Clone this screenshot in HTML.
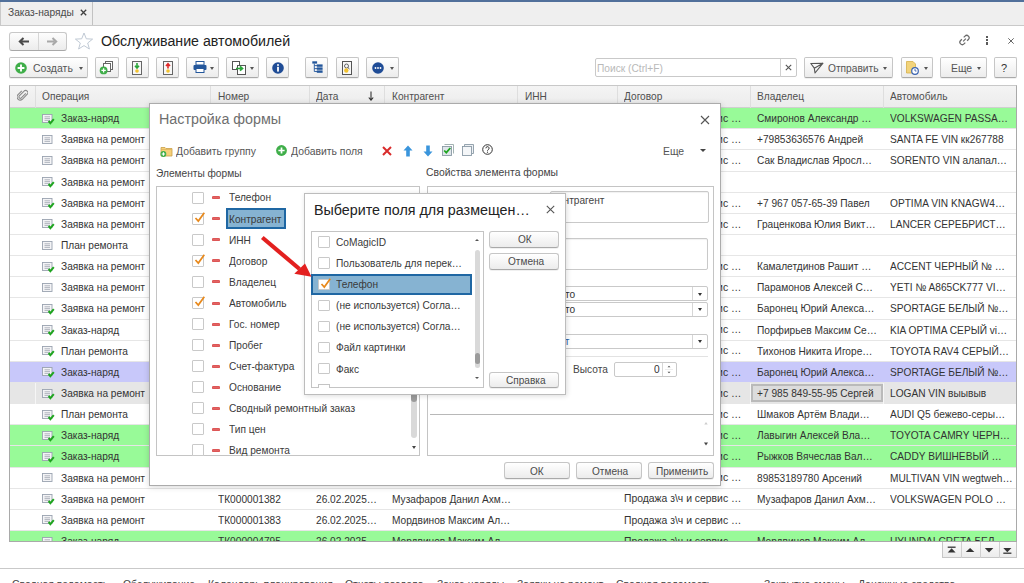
<!DOCTYPE html><html><head><meta charset="utf-8"><style>
*{margin:0;padding:0;box-sizing:border-box}
html,body{width:1024px;height:583px;overflow:hidden;background:#fff;font-family:"Liberation Sans",sans-serif}
div{position:absolute}
.t{white-space:nowrap}
.btn{border:1px solid #c6c6c6;border-bottom-color:#a9a9a9;border-radius:2px;background:linear-gradient(#ffffff,#ececec);box-shadow:0 1px 0 rgba(0,0,0,0.06)}
.dd{width:0;height:0;border-left:2.5px solid transparent;border-right:2.5px solid transparent;border-top:3px solid #555}
.cb{width:11.5px;height:12px;border:1px solid #c9c9c9;border-radius:1px;background:#fff}
.mn{width:8px;height:3px;background:#e26464;border-radius:1.5px;box-shadow:inset 0 0 0 0.6px #d84848}
</style></head><body><div style="left:0px;top:0px;width:1024px;height:26px;background:#efefef;border-bottom:1px solid #c9c9c9"></div><div style="left:0px;top:1px;width:93px;height:24px;background:#efefef;border-right:1px solid #c2c2c2;border-left:1px solid #c9c9c9"></div><div style="left:0px;top:0px;width:1024px;height:1.5px;background:#51709b"></div><div class="t" style="left:8.2px;top:5.717px;font-size:10.914px;line-height:12.551px;color:#4a4a4a;transform:scaleX(0.9346);transform-origin:0 0;">Заказ-наряды</div><svg style="position:absolute;left:80px;top:9px" width="7" height="7" viewBox="0 0 7 7"><path d="M0.8 0.8L6.2 6.2M6.2 0.8L0.8 6.2" stroke="#404040" stroke-width="1.3"/></svg><div style="left:9px;top:31.5px;width:57.5px;height:19px;border:1px solid #c8c8c8;border-bottom-color:#a8a8a8;border-radius:3px;background:linear-gradient(#fdfdfd,#ececec)"></div><div style="left:38.3px;top:32.5px;width:1px;height:17px;background:#d6d6d6"></div><svg style="position:absolute;left:18px;top:37px" width="12" height="9" viewBox="0 0 12 9"><path d="M11 4.5H3.5M5.5 1L1.8 4.5L5.5 8" stroke="#4a4a4a" stroke-width="2" fill="none"/></svg><svg style="position:absolute;left:46px;top:37px" width="12" height="9" viewBox="0 0 12 9"><path d="M1 4.5H8.5M6.5 1L10.2 4.5L6.5 8" stroke="#a8a8a8" stroke-width="2" fill="none"/></svg><svg style="position:absolute;left:74px;top:32px" width="20" height="18" viewBox="0 0 20 18"><path d="M10 1L12.3 6.8L18.6 7.1L13.7 11L15.4 17L10 13.6L4.6 17L6.3 11L1.4 7.1L7.7 6.8Z" stroke="#b9c3cf" stroke-width="0.9" fill="none"/></svg><div class="t" style="left:100.5px;top:32.342px;font-size:15.194px;line-height:17.473px;color:#222;transform:scaleX(0.9346);transform-origin:0 0;">Обслуживание автомобилей</div><svg style="position:absolute;left:957.5px;top:34px" width="13" height="12" viewBox="0 0 13 12"><g transform="rotate(-45 6.5 6)" stroke="#6a6a6a" stroke-width="1.25" fill="none"><path d="M5.2 3.6H3.4a2.4 2.4 0 0 0 0 4.8H5.2"/><path d="M7.8 3.6H9.6a2.4 2.4 0 0 1 0 4.8H7.8"/><path d="M4.6 6H8.4"/></g></svg><div style="left:985.9px;top:36px;width:2.2px;height:2.2px;background:#5a5a5a"></div><div style="left:985.9px;top:39.2px;width:2.2px;height:2.2px;background:#5a5a5a"></div><div style="left:985.9px;top:42.4px;width:2.2px;height:2.2px;background:#5a5a5a"></div><svg style="position:absolute;left:1007.5px;top:37.5px" width="6" height="6" viewBox="0 0 6 6"><path d="M0.3 0.3L5.7 5.7M5.7 0.3L0.3 5.7" stroke="#666" stroke-width="1"/></svg><div class="btn" style="left:9px;top:57px;width:79px;height:20.5px;"></div><svg style="position:absolute;left:15.3px;top:61.9px" width="12" height="12" viewBox="0 0 12 12"><circle cx="6" cy="6" r="5.8" fill="#3fae49"/><path d="M6 2.6V9.4M2.6 6H9.4" stroke="#fff" stroke-width="1.9"/></svg><div class="t" style="left:33.1px;top:61.627px;font-size:11.235px;line-height:12.92px;color:#555;transform:scaleX(0.9346);transform-origin:0 0;">Создать</div><div class="dd" style="left:78.5px;top:67.3px;width:0px;height:0px;"></div><div class="btn" style="left:95.3px;top:57px;width:23.4px;height:20.5px"></div><div class="btn" style="left:125.5px;top:57px;width:23.1px;height:20.5px"></div><div class="btn" style="left:156.4px;top:57px;width:23.1px;height:20.5px"></div><div class="btn" style="left:186.3px;top:57px;width:32.6px;height:20.5px"></div><div class="btn" style="left:226.3px;top:57px;width:32.3px;height:20.5px"></div><div class="btn" style="left:266.3px;top:57px;width:23px;height:20.5px"></div><div class="btn" style="left:305.3px;top:57px;width:23.1px;height:20.5px"></div><div class="btn" style="left:335.8px;top:57px;width:22.8px;height:20.5px"></div><div class="btn" style="left:366.4px;top:57px;width:32.3px;height:20.5px"></div><svg style="position:absolute;left:99px;top:61px" width="16" height="14" viewBox="0 0 16 14"><rect x="6.5" y="0.5" width="7" height="8" fill="#fff" stroke="#666"/><rect x="4.5" y="2.5" width="7" height="8" fill="#fff" stroke="#666"/><circle cx="4.6" cy="9.4" r="3.9" fill="#3fae49"/><path d="M4.6 7.2V11.6M2.4 9.4H6.8" stroke="#fff" stroke-width="1.3"/></svg><svg style="position:absolute;left:132px;top:60.5px" width="10" height="14" viewBox="0 0 10 14"><rect x="0.5" y="0.5" width="9" height="13" fill="#f7f7f7" stroke="#666"/><path d="M5 2V6.5M3 4.7L5 7L7 4.7" stroke="#2aa53a" stroke-width="1.6" fill="none"/><circle cx="5" cy="10" r="1.8" fill="#f2c230"/></svg><svg style="position:absolute;left:163px;top:60.5px" width="10" height="14" viewBox="0 0 10 14"><rect x="0.5" y="0.5" width="9" height="13" fill="#f7f7f7" stroke="#666"/><path d="M5 3V7.5M3 5L5 2.7L7 5" stroke="#e02828" stroke-width="1.6" fill="none"/><circle cx="5" cy="10" r="1.8" fill="#f2c230"/></svg><svg style="position:absolute;left:192.5px;top:61px" width="14" height="12" viewBox="0 0 14 12"><rect x="3" y="0.5" width="8" height="3.5" fill="#fff" stroke="#23569b"/><rect x="0.5" y="4" width="13" height="5" rx="1" fill="#23569b"/><rect x="3" y="7.5" width="8" height="4" fill="#fff" stroke="#23569b"/></svg><div class="dd" style="left:210px;top:67.3px"></div><svg style="position:absolute;left:231.5px;top:61px" width="15" height="14" viewBox="0 0 15 14"><rect x="0.5" y="0.5" width="7" height="8" fill="#fff" stroke="#555"/><rect x="5.5" y="4.5" width="8" height="9" fill="#fff" stroke="#555"/><path d="M4 7.5H10M8 5.3L10.5 7.5L8 9.7" stroke="#2aa53a" stroke-width="1.7" fill="none"/></svg><div class="dd" style="left:250px;top:67.3px"></div><svg style="position:absolute;left:271.5px;top:61.5px" width="12" height="12" viewBox="0 0 12 12"><circle cx="6" cy="6" r="5.8" fill="#1f4c96"/><rect x="5.1" y="4.8" width="1.8" height="4.8" fill="#fff"/><circle cx="6" cy="3.1" r="1" fill="#fff"/></svg><svg style="position:absolute;left:311.5px;top:61px" width="11" height="12" viewBox="0 0 11 12"><rect x="0.3" y="0.3" width="4.8" height="2.3" fill="#23569b"/><path d="M2.3 2.6V10.5H5M2.3 4.6H5M2.3 7.6H5" stroke="#23569b" stroke-width="0.9" fill="none"/><rect x="4.8" y="3.4" width="5.8" height="2.4" fill="#23569b"/><rect x="4.8" y="6.4" width="5.8" height="2.4" fill="#23569b"/><rect x="4.8" y="9.4" width="5.8" height="2.4" fill="#23569b"/></svg><svg style="position:absolute;left:342px;top:60.5px" width="10" height="14" viewBox="0 0 10 14"><rect x="0.5" y="0.5" width="9" height="13" fill="#f7f7f7" stroke="#555"/><circle cx="4.5" cy="5" r="2" fill="none" stroke="#555" stroke-width="0.9"/><path d="M6 6.6L7.5 8" stroke="#555"/><circle cx="4.3" cy="9.5" r="2.2" fill="#f2c230"/></svg><svg style="position:absolute;left:371.5px;top:61.5px" width="12" height="12" viewBox="0 0 12 12"><circle cx="6" cy="6" r="5.8" fill="#1f4c96"/><circle cx="3.5" cy="6" r="0.9" fill="#fff"/><circle cx="6" cy="6" r="0.9" fill="#fff"/><circle cx="8.5" cy="6" r="0.9" fill="#fff"/></svg><div class="dd" style="left:389.5px;top:67.3px"></div><div style="left:594.5px;top:58px;width:202.3px;height:19.2px;border:1px solid #c9c9c9;border-radius:2px;background:#fff"></div><div style="left:780.3px;top:58.7px;width:1px;height:18px;background:#d0d0d0"></div><div class="t" style="left:596.8px;top:61.717px;font-size:10.914px;line-height:12.551px;color:#b9b9b9;transform:scaleX(0.9346);transform-origin:0 0;">Поиск (Ctrl+F)</div><svg style="position:absolute;left:785px;top:64px" width="7" height="7" viewBox="0 0 7 7"><path d="M0.8 0.8L6.2 6.2M6.2 0.8L0.8 6.2" stroke="#555" stroke-width="1.1"/></svg><div class="btn" style="left:804.4px;top:57px;width:89px;height:20.5px"></div><svg style="position:absolute;left:809.5px;top:62px" width="14" height="12" viewBox="0 0 14 12"><path d="M0.8 1.5L13 1.2L5 11L4.3 6.2Z M4.3 6.2L13 1.2" stroke="#555" stroke-width="1.1" fill="none" stroke-linejoin="round"/></svg><div class="t" style="left:828.1px;top:61.917px;font-size:10.914px;line-height:12.551px;color:#555;transform:scaleX(0.9346);transform-origin:0 0;">Отправить</div><div class="dd" style="left:883px;top:67.3px"></div><div class="btn" style="left:900.6px;top:57px;width:32.4px;height:20.5px"></div><svg style="position:absolute;left:905.5px;top:60.5px" width="14" height="14" viewBox="0 0 14 14"><path d="M0.5 0.5H7L9.5 3V12H0.5Z" fill="#f2d37a" stroke="#d6b04a" stroke-width="0.8"/><circle cx="9" cy="10" r="3.3" fill="#fff" stroke="#3a63b0" stroke-width="1.2"/><path d="M9 8V10H10.5" stroke="#3a63b0" stroke-width="0.9" fill="none"/></svg><div class="dd" style="left:923.5px;top:67.3px"></div><div class="btn" style="left:940.4px;top:57px;width:46.3px;height:20.5px"></div><div class="t" style="left:951px;top:61.724px;font-size:11.128px;line-height:12.797px;color:#555;transform:scaleX(0.9346);transform-origin:0 0;">Еще</div><div class="dd" style="left:976.5px;top:67.3px"></div><div class="btn" style="left:993.7px;top:57px;width:23.2px;height:20.5px"></div><div class="t" style="left:1001.3px;top:61.343px;font-size:11.77px;line-height:13.535px;color:#333;transform:scaleX(0.9346);transform-origin:0 0;">?</div><div style="left:9px;top:85.3px;width:1008px;height:456.3px;border:1px solid #a9a9a9;border-top-color:#c8c8c8;background:#fff"></div><div style="left:10px;top:86.3px;width:1006px;height:21.42px;background:linear-gradient(#f4f4f4,#ececec);border-bottom:1px solid #cfcfcf"></div><div style="left:35px;top:86.3px;width:1px;height:21.42px;background:#dedede"></div><div style="left:210px;top:86.3px;width:1px;height:21.42px;background:#dedede"></div><div style="left:309px;top:86.3px;width:1px;height:21.42px;background:#dedede"></div><div style="left:384px;top:86.3px;width:1px;height:21.42px;background:#dedede"></div><div style="left:517px;top:86.3px;width:1px;height:21.42px;background:#dedede"></div><div style="left:617px;top:86.3px;width:1px;height:21.42px;background:#dedede"></div><div style="left:750px;top:86.3px;width:1px;height:21.42px;background:#dedede"></div><div style="left:883px;top:86.3px;width:1px;height:21.42px;background:#dedede"></div><svg style="position:absolute;left:16.5px;top:89px" width="11" height="12" viewBox="0 0 11 12"><path d="M8.5 3.5L4 8a1.4 1.4 0 0 1-2-2L7 1a2.3 2.3 0 0 1 3.2 3.2L5 9.5a3.2 3.2 0 0 1-4.5-4.5L4.5 1" stroke="#8a8a8a" stroke-width="1.1" fill="none" transform="translate(0.3,0.8)"/></svg><div class="t" style="left:41.6px;top:90.265px;font-size:10.861px;line-height:12.49px;color:#4f4f4f;transform:scaleX(0.9346);transform-origin:0 0;">Операция</div><div class="t" style="left:217.8px;top:90.265px;font-size:10.861px;line-height:12.49px;color:#4f4f4f;transform:scaleX(0.9346);transform-origin:0 0;">Номер</div><div class="t" style="left:316.2px;top:90.265px;font-size:10.861px;line-height:12.49px;color:#4f4f4f;transform:scaleX(0.9346);transform-origin:0 0;">Дата</div><div class="t" style="left:391.6px;top:90.265px;font-size:10.861px;line-height:12.49px;color:#4f4f4f;transform:scaleX(0.9346);transform-origin:0 0;">Контрагент</div><div class="t" style="left:524.5px;top:90.265px;font-size:10.861px;line-height:12.49px;color:#4f4f4f;transform:scaleX(0.9346);transform-origin:0 0;">ИНН</div><div class="t" style="left:624.2px;top:90.265px;font-size:10.861px;line-height:12.49px;color:#4f4f4f;transform:scaleX(0.9346);transform-origin:0 0;">Договор</div><div class="t" style="left:757.2px;top:90.265px;font-size:10.861px;line-height:12.49px;color:#4f4f4f;transform:scaleX(0.9346);transform-origin:0 0;">Владелец</div><div class="t" style="left:890px;top:90.265px;font-size:10.861px;line-height:12.49px;color:#4f4f4f;transform:scaleX(0.9346);transform-origin:0 0;">Автомобиль</div><svg style="position:absolute;left:368px;top:91px" width="6" height="10" viewBox="0 0 6 10"><path d="M3 0.5V9M0.8 6.5L3 9.2L5.2 6.5" stroke="#333" stroke-width="1.1" fill="none"/></svg><div style="left:10px;top:108.22px;width:1006px;height:21.14px;background:#98fa98;border-bottom:1px solid #e6e6e6;overflow:hidden"></div><svg style="position:absolute;left:42px;top:113.72px" width="13" height="11" viewBox="0 0 13 11"><rect x="0.5" y="0.5" width="9.5" height="8" fill="#f4f4f6" stroke="#9aa3b0" stroke-width="0.9"/><path d="M2.5 2.8H8M2.5 4.6H8M2.5 6.4H8" stroke="#a0a6b0" stroke-width="0.8"/><path d="M6.6 7L8.4 9.2L11.8 5.2" stroke="#1fa51f" stroke-width="2" fill="none"/></svg><div class="t" style="left:60.7px;top:112.185px;font-size:10.861px;line-height:12.49px;color:#333;transform:scaleX(0.9346);transform-origin:0 0;">Заказ-наряд</div><div class="t" style="left:624.3px;top:111.944px;font-size:11.128px;line-height:12.797px;color:#333;transform:scaleX(0.9346);transform-origin:0 0;">Продажа з\ч и сервис …</div><div class="t" style="left:757.2px;top:112.185px;font-size:10.861px;line-height:12.49px;color:#333;transform:scaleX(0.9346);transform-origin:0 0;">Смиронов Александр …</div><div class="t" style="left:890px;top:112.185px;font-size:10.861px;line-height:12.49px;color:#333;transform:scaleX(0.9346);transform-origin:0 0;">VOLKSWAGEN PASSA…</div><div style="left:10px;top:129.36px;width:1006px;height:21.14px;background:#fff;border-bottom:1px solid #e6e6e6;overflow:hidden"></div><svg style="position:absolute;left:42px;top:134.86px" width="13" height="11" viewBox="0 0 13 11"><rect x="0.5" y="0.5" width="9.5" height="8" fill="#f4f4f6" stroke="#9aa3b0" stroke-width="0.9"/><path d="M2.5 2.8H8M2.5 4.6H8M2.5 6.4H8" stroke="#a0a6b0" stroke-width="0.8"/></svg><div class="t" style="left:60.7px;top:133.325px;font-size:10.861px;line-height:12.49px;color:#333;transform:scaleX(0.9346);transform-origin:0 0;">Заявка на ремонт</div><div class="t" style="left:624.3px;top:133.084px;font-size:11.128px;line-height:12.797px;color:#333;transform:scaleX(0.9346);transform-origin:0 0;">Продажа з\ч и сервис …</div><div class="t" style="left:757.2px;top:133.325px;font-size:10.861px;line-height:12.49px;color:#333;transform:scaleX(0.9346);transform-origin:0 0;">+79853636576 Андрей</div><div class="t" style="left:890px;top:133.325px;font-size:10.861px;line-height:12.49px;color:#333;transform:scaleX(0.9346);transform-origin:0 0;">SANTA FE VIN кк267788</div><div style="left:10px;top:150.5px;width:1006px;height:21.14px;background:#fff;border-bottom:1px solid #e6e6e6;overflow:hidden"></div><svg style="position:absolute;left:42px;top:156.0px" width="13" height="11" viewBox="0 0 13 11"><rect x="0.5" y="0.5" width="9.5" height="8" fill="#f4f4f6" stroke="#9aa3b0" stroke-width="0.9"/><path d="M2.5 2.8H8M2.5 4.6H8M2.5 6.4H8" stroke="#a0a6b0" stroke-width="0.8"/></svg><div class="t" style="left:60.7px;top:154.465px;font-size:10.861px;line-height:12.49px;color:#333;transform:scaleX(0.9346);transform-origin:0 0;">Заявка на ремонт</div><div class="t" style="left:624.3px;top:154.224px;font-size:11.128px;line-height:12.797px;color:#333;transform:scaleX(0.9346);transform-origin:0 0;">Продажа з\ч и сервис …</div><div class="t" style="left:757.2px;top:154.465px;font-size:10.861px;line-height:12.49px;color:#333;transform:scaleX(0.9346);transform-origin:0 0;">Сак Владислав Яросл…</div><div class="t" style="left:890px;top:154.465px;font-size:10.861px;line-height:12.49px;color:#333;transform:scaleX(0.9346);transform-origin:0 0;">SORENTO VIN алапал…</div><div style="left:10px;top:171.64px;width:1006px;height:21.14px;background:#fff;border-bottom:1px solid #e6e6e6;overflow:hidden"></div><svg style="position:absolute;left:42px;top:177.14px" width="13" height="11" viewBox="0 0 13 11"><rect x="0.5" y="0.5" width="9.5" height="8" fill="#f4f4f6" stroke="#9aa3b0" stroke-width="0.9"/><path d="M2.5 2.8H8M2.5 4.6H8M2.5 6.4H8" stroke="#a0a6b0" stroke-width="0.8"/><path d="M6.6 7L8.4 9.2L11.8 5.2" stroke="#1fa51f" stroke-width="2" fill="none"/></svg><div class="t" style="left:60.7px;top:175.605px;font-size:10.861px;line-height:12.49px;color:#333;transform:scaleX(0.9346);transform-origin:0 0;">Заявка на ремонт</div><div style="left:10px;top:192.78px;width:1006px;height:21.14px;background:#fff;border-bottom:1px solid #e6e6e6;overflow:hidden"></div><svg style="position:absolute;left:42px;top:198.28px" width="13" height="11" viewBox="0 0 13 11"><rect x="0.5" y="0.5" width="9.5" height="8" fill="#f4f4f6" stroke="#9aa3b0" stroke-width="0.9"/><path d="M2.5 2.8H8M2.5 4.6H8M2.5 6.4H8" stroke="#a0a6b0" stroke-width="0.8"/><path d="M6.6 7L8.4 9.2L11.8 5.2" stroke="#1fa51f" stroke-width="2" fill="none"/></svg><div class="t" style="left:60.7px;top:196.745px;font-size:10.861px;line-height:12.49px;color:#333;transform:scaleX(0.9346);transform-origin:0 0;">Заявка на ремонт</div><div class="t" style="left:624.3px;top:196.504px;font-size:11.128px;line-height:12.797px;color:#333;transform:scaleX(0.9346);transform-origin:0 0;">Продажа з\ч и сервис …</div><div class="t" style="left:757.2px;top:196.745px;font-size:10.861px;line-height:12.49px;color:#333;transform:scaleX(0.9346);transform-origin:0 0;">+7 967 057-65-39 Павел</div><div class="t" style="left:890px;top:196.745px;font-size:10.861px;line-height:12.49px;color:#333;transform:scaleX(0.9346);transform-origin:0 0;">OPTIMA VIN KNAGW4…</div><div style="left:10px;top:213.92px;width:1006px;height:21.14px;background:#fff;border-bottom:1px solid #e6e6e6;overflow:hidden"></div><svg style="position:absolute;left:42px;top:219.42px" width="13" height="11" viewBox="0 0 13 11"><rect x="0.5" y="0.5" width="9.5" height="8" fill="#f4f4f6" stroke="#9aa3b0" stroke-width="0.9"/><path d="M2.5 2.8H8M2.5 4.6H8M2.5 6.4H8" stroke="#a0a6b0" stroke-width="0.8"/><path d="M6.6 7L8.4 9.2L11.8 5.2" stroke="#1fa51f" stroke-width="2" fill="none"/></svg><div class="t" style="left:60.7px;top:217.885px;font-size:10.861px;line-height:12.49px;color:#333;transform:scaleX(0.9346);transform-origin:0 0;">Заявка на ремонт</div><div class="t" style="left:624.3px;top:217.644px;font-size:11.128px;line-height:12.797px;color:#333;transform:scaleX(0.9346);transform-origin:0 0;">Продажа з\ч и сервис …</div><div class="t" style="left:757.2px;top:217.885px;font-size:10.861px;line-height:12.49px;color:#333;transform:scaleX(0.9346);transform-origin:0 0;">Граценкова Юлия Викт…</div><div class="t" style="left:890px;top:217.885px;font-size:10.861px;line-height:12.49px;color:#333;transform:scaleX(0.9346);transform-origin:0 0;">LANCER СЕРЕБРИСТ…</div><div style="left:10px;top:235.06px;width:1006px;height:21.14px;background:#fff;border-bottom:1px solid #e6e6e6;overflow:hidden"></div><svg style="position:absolute;left:42px;top:240.56px" width="13" height="11" viewBox="0 0 13 11"><rect x="0.5" y="0.5" width="9.5" height="8" fill="#f4f4f6" stroke="#9aa3b0" stroke-width="0.9"/><path d="M2.5 2.8H8M2.5 4.6H8M2.5 6.4H8" stroke="#a0a6b0" stroke-width="0.8"/></svg><div class="t" style="left:60.7px;top:239.025px;font-size:10.861px;line-height:12.49px;color:#333;transform:scaleX(0.9346);transform-origin:0 0;">План ремонта</div><div style="left:10px;top:256.2px;width:1006px;height:21.14px;background:#fff;border-bottom:1px solid #e6e6e6;overflow:hidden"></div><svg style="position:absolute;left:42px;top:261.7px" width="13" height="11" viewBox="0 0 13 11"><rect x="0.5" y="0.5" width="9.5" height="8" fill="#f4f4f6" stroke="#9aa3b0" stroke-width="0.9"/><path d="M2.5 2.8H8M2.5 4.6H8M2.5 6.4H8" stroke="#a0a6b0" stroke-width="0.8"/><path d="M6.6 7L8.4 9.2L11.8 5.2" stroke="#1fa51f" stroke-width="2" fill="none"/></svg><div class="t" style="left:60.7px;top:260.165px;font-size:10.861px;line-height:12.49px;color:#333;transform:scaleX(0.9346);transform-origin:0 0;">Заявка на ремонт</div><div class="t" style="left:624.3px;top:259.924px;font-size:11.128px;line-height:12.797px;color:#333;transform:scaleX(0.9346);transform-origin:0 0;">Продажа з\ч и сервис …</div><div class="t" style="left:757.2px;top:260.165px;font-size:10.861px;line-height:12.49px;color:#333;transform:scaleX(0.9346);transform-origin:0 0;">Камалетдинов Рашит …</div><div class="t" style="left:890px;top:260.165px;font-size:10.861px;line-height:12.49px;color:#333;transform:scaleX(0.9346);transform-origin:0 0;">ACCENT ЧЕРНЫЙ № …</div><div style="left:10px;top:277.34px;width:1006px;height:21.14px;background:#fff;border-bottom:1px solid #e6e6e6;overflow:hidden"></div><svg style="position:absolute;left:42px;top:282.84px" width="13" height="11" viewBox="0 0 13 11"><rect x="0.5" y="0.5" width="9.5" height="8" fill="#f4f4f6" stroke="#9aa3b0" stroke-width="0.9"/><path d="M2.5 2.8H8M2.5 4.6H8M2.5 6.4H8" stroke="#a0a6b0" stroke-width="0.8"/></svg><div class="t" style="left:60.7px;top:281.305px;font-size:10.861px;line-height:12.49px;color:#333;transform:scaleX(0.9346);transform-origin:0 0;">Заявка на ремонт</div><div class="t" style="left:624.3px;top:281.064px;font-size:11.128px;line-height:12.797px;color:#333;transform:scaleX(0.9346);transform-origin:0 0;">Продажа з\ч и сервис …</div><div class="t" style="left:757.2px;top:281.305px;font-size:10.861px;line-height:12.49px;color:#333;transform:scaleX(0.9346);transform-origin:0 0;">Парамонов Алексей С…</div><div class="t" style="left:890px;top:281.305px;font-size:10.861px;line-height:12.49px;color:#333;transform:scaleX(0.9346);transform-origin:0 0;">YETI № A865CK777 VI…</div><div style="left:10px;top:298.48px;width:1006px;height:21.14px;background:#fff;border-bottom:1px solid #e6e6e6;overflow:hidden"></div><svg style="position:absolute;left:42px;top:303.98px" width="13" height="11" viewBox="0 0 13 11"><rect x="0.5" y="0.5" width="9.5" height="8" fill="#f4f4f6" stroke="#9aa3b0" stroke-width="0.9"/><path d="M2.5 2.8H8M2.5 4.6H8M2.5 6.4H8" stroke="#a0a6b0" stroke-width="0.8"/><path d="M6.6 7L8.4 9.2L11.8 5.2" stroke="#1fa51f" stroke-width="2" fill="none"/></svg><div class="t" style="left:60.7px;top:302.445px;font-size:10.861px;line-height:12.49px;color:#333;transform:scaleX(0.9346);transform-origin:0 0;">Заявка на ремонт</div><div class="t" style="left:624.3px;top:302.204px;font-size:11.128px;line-height:12.797px;color:#333;transform:scaleX(0.9346);transform-origin:0 0;">Продажа з\ч и сервис …</div><div class="t" style="left:757.2px;top:302.445px;font-size:10.861px;line-height:12.49px;color:#333;transform:scaleX(0.9346);transform-origin:0 0;">Баронец Юрий Алекса…</div><div class="t" style="left:890px;top:302.445px;font-size:10.861px;line-height:12.49px;color:#333;transform:scaleX(0.9346);transform-origin:0 0;">SPORTAGE БЕЛЫЙ №…</div><div style="left:10px;top:319.62px;width:1006px;height:21.14px;background:#fff;border-bottom:1px solid #e6e6e6;overflow:hidden"></div><svg style="position:absolute;left:42px;top:325.12px" width="13" height="11" viewBox="0 0 13 11"><rect x="0.5" y="0.5" width="9.5" height="8" fill="#f4f4f6" stroke="#9aa3b0" stroke-width="0.9"/><path d="M2.5 2.8H8M2.5 4.6H8M2.5 6.4H8" stroke="#a0a6b0" stroke-width="0.8"/><path d="M6.6 7L8.4 9.2L11.8 5.2" stroke="#1fa51f" stroke-width="2" fill="none"/></svg><div class="t" style="left:60.7px;top:323.585px;font-size:10.861px;line-height:12.49px;color:#333;transform:scaleX(0.9346);transform-origin:0 0;">Заказ-наряд</div><div class="t" style="left:624.3px;top:323.344px;font-size:11.128px;line-height:12.797px;color:#333;transform:scaleX(0.9346);transform-origin:0 0;">Продажа з\ч и сервис …</div><div class="t" style="left:757.2px;top:323.585px;font-size:10.861px;line-height:12.49px;color:#333;transform:scaleX(0.9346);transform-origin:0 0;">Порфирьев Максим Се…</div><div class="t" style="left:890px;top:323.585px;font-size:10.861px;line-height:12.49px;color:#333;transform:scaleX(0.9346);transform-origin:0 0;">KIA OPTIMA СЕРЫЙ vi…</div><div style="left:10px;top:340.76px;width:1006px;height:21.14px;background:#fff;border-bottom:1px solid #e6e6e6;overflow:hidden"></div><svg style="position:absolute;left:42px;top:346.26px" width="13" height="11" viewBox="0 0 13 11"><rect x="0.5" y="0.5" width="9.5" height="8" fill="#f4f4f6" stroke="#9aa3b0" stroke-width="0.9"/><path d="M2.5 2.8H8M2.5 4.6H8M2.5 6.4H8" stroke="#a0a6b0" stroke-width="0.8"/><path d="M6.6 7L8.4 9.2L11.8 5.2" stroke="#1fa51f" stroke-width="2" fill="none"/></svg><div class="t" style="left:60.7px;top:344.725px;font-size:10.861px;line-height:12.49px;color:#333;transform:scaleX(0.9346);transform-origin:0 0;">План ремонта</div><div class="t" style="left:624.3px;top:344.484px;font-size:11.128px;line-height:12.797px;color:#333;transform:scaleX(0.9346);transform-origin:0 0;">Продажа з\ч и сервис …</div><div class="t" style="left:757.2px;top:344.725px;font-size:10.861px;line-height:12.49px;color:#333;transform:scaleX(0.9346);transform-origin:0 0;">Тихонов Никита Игоре…</div><div class="t" style="left:890px;top:344.725px;font-size:10.861px;line-height:12.49px;color:#333;transform:scaleX(0.9346);transform-origin:0 0;">TOYOTA RAV4 СЕРЫЙ…</div><div style="left:10px;top:361.9px;width:1006px;height:21.14px;background:#c8c8fa;border-bottom:1px solid #e6e6e6;overflow:hidden"></div><svg style="position:absolute;left:42px;top:367.4px" width="13" height="11" viewBox="0 0 13 11"><rect x="0.5" y="0.5" width="9.5" height="8" fill="#f4f4f6" stroke="#9aa3b0" stroke-width="0.9"/><path d="M2.5 2.8H8M2.5 4.6H8M2.5 6.4H8" stroke="#a0a6b0" stroke-width="0.8"/><path d="M6.6 7L8.4 9.2L11.8 5.2" stroke="#1fa51f" stroke-width="2" fill="none"/></svg><div class="t" style="left:60.7px;top:365.865px;font-size:10.861px;line-height:12.49px;color:#333;transform:scaleX(0.9346);transform-origin:0 0;">Заказ-наряд</div><div class="t" style="left:624.3px;top:365.624px;font-size:11.128px;line-height:12.797px;color:#333;transform:scaleX(0.9346);transform-origin:0 0;">Продажа з\ч и сервис …</div><div class="t" style="left:757.2px;top:365.865px;font-size:10.861px;line-height:12.49px;color:#333;transform:scaleX(0.9346);transform-origin:0 0;">Баронец Юрий Алекса…</div><div class="t" style="left:890px;top:365.865px;font-size:10.861px;line-height:12.49px;color:#333;transform:scaleX(0.9346);transform-origin:0 0;">SPORTAGE БЕЛЫЙ №…</div><div style="left:10px;top:383.04px;width:1006px;height:21.14px;background:#e6e6e6;border-bottom:1px solid #e6e6e6;overflow:hidden"></div><div style="left:35px;top:383.04px;width:1px;height:21.14px;background:#f6f6f6"></div><div style="left:210px;top:383.04px;width:1px;height:21.14px;background:#f6f6f6"></div><div style="left:309px;top:383.04px;width:1px;height:21.14px;background:#f6f6f6"></div><div style="left:384px;top:383.04px;width:1px;height:21.14px;background:#f6f6f6"></div><div style="left:517px;top:383.04px;width:1px;height:21.14px;background:#f6f6f6"></div><div style="left:617px;top:383.04px;width:1px;height:21.14px;background:#f6f6f6"></div><div style="left:750px;top:383.04px;width:1px;height:21.14px;background:#f6f6f6"></div><div style="left:883px;top:383.04px;width:1px;height:21.14px;background:#f6f6f6"></div><svg style="position:absolute;left:42px;top:388.54px" width="13" height="11" viewBox="0 0 13 11"><rect x="0.5" y="0.5" width="9.5" height="8" fill="#f4f4f6" stroke="#9aa3b0" stroke-width="0.9"/><path d="M2.5 2.8H8M2.5 4.6H8M2.5 6.4H8" stroke="#a0a6b0" stroke-width="0.8"/><path d="M6.6 7L8.4 9.2L11.8 5.2" stroke="#1fa51f" stroke-width="2" fill="none"/></svg><div class="t" style="left:60.7px;top:387.005px;font-size:10.861px;line-height:12.49px;color:#333;transform:scaleX(0.9346);transform-origin:0 0;">Заявка на ремонт</div><div class="t" style="left:624.3px;top:386.764px;font-size:11.128px;line-height:12.797px;color:#333;transform:scaleX(0.9346);transform-origin:0 0;">Продажа з\ч и сервис …</div><div style="left:751.2px;top:384.44px;width:131.4px;height:17.9px;border:2px solid #bababa;background:#dcdcdc"></div><div class="t" style="left:757.2px;top:387.005px;font-size:10.861px;line-height:12.49px;color:#333;transform:scaleX(0.9346);transform-origin:0 0;">+7 985 849-55-95 Сергей</div><div class="t" style="left:890px;top:387.005px;font-size:10.861px;line-height:12.49px;color:#333;transform:scaleX(0.9346);transform-origin:0 0;">LOGAN VIN выывыв</div><div style="left:10px;top:404.18px;width:1006px;height:21.14px;background:#fff;border-bottom:1px solid #e6e6e6;overflow:hidden"></div><svg style="position:absolute;left:42px;top:409.68px" width="13" height="11" viewBox="0 0 13 11"><rect x="0.5" y="0.5" width="9.5" height="8" fill="#f4f4f6" stroke="#9aa3b0" stroke-width="0.9"/><path d="M2.5 2.8H8M2.5 4.6H8M2.5 6.4H8" stroke="#a0a6b0" stroke-width="0.8"/><path d="M6.6 7L8.4 9.2L11.8 5.2" stroke="#1fa51f" stroke-width="2" fill="none"/></svg><div class="t" style="left:60.7px;top:408.145px;font-size:10.861px;line-height:12.49px;color:#333;transform:scaleX(0.9346);transform-origin:0 0;">План ремонта</div><div class="t" style="left:624.3px;top:407.904px;font-size:11.128px;line-height:12.797px;color:#333;transform:scaleX(0.9346);transform-origin:0 0;">Продажа з\ч и сервис …</div><div class="t" style="left:757.2px;top:408.145px;font-size:10.861px;line-height:12.49px;color:#333;transform:scaleX(0.9346);transform-origin:0 0;">Шмаков Артём Влади…</div><div class="t" style="left:890px;top:408.145px;font-size:10.861px;line-height:12.49px;color:#333;transform:scaleX(0.9346);transform-origin:0 0;">AUDI Q5 бежево-серы…</div><div style="left:10px;top:425.32px;width:1006px;height:21.14px;background:#98fa98;border-bottom:1px solid #e6e6e6;overflow:hidden"></div><svg style="position:absolute;left:42px;top:430.82px" width="13" height="11" viewBox="0 0 13 11"><rect x="0.5" y="0.5" width="9.5" height="8" fill="#f4f4f6" stroke="#9aa3b0" stroke-width="0.9"/><path d="M2.5 2.8H8M2.5 4.6H8M2.5 6.4H8" stroke="#a0a6b0" stroke-width="0.8"/><path d="M6.6 7L8.4 9.2L11.8 5.2" stroke="#1fa51f" stroke-width="2" fill="none"/></svg><div class="t" style="left:60.7px;top:429.285px;font-size:10.861px;line-height:12.49px;color:#333;transform:scaleX(0.9346);transform-origin:0 0;">Заказ-наряд</div><div class="t" style="left:624.3px;top:429.044px;font-size:11.128px;line-height:12.797px;color:#333;transform:scaleX(0.9346);transform-origin:0 0;">Продажа з\ч и сервис …</div><div class="t" style="left:757.2px;top:429.285px;font-size:10.861px;line-height:12.49px;color:#333;transform:scaleX(0.9346);transform-origin:0 0;">Лавыгин Алексей Вла…</div><div class="t" style="left:890px;top:429.285px;font-size:10.861px;line-height:12.49px;color:#333;transform:scaleX(0.9346);transform-origin:0 0;">TOYOTA CAMRY ЧЕРН…</div><div style="left:10px;top:446.46px;width:1006px;height:21.14px;background:#98fa98;border-bottom:1px solid #e6e6e6;overflow:hidden"></div><svg style="position:absolute;left:42px;top:451.96px" width="13" height="11" viewBox="0 0 13 11"><rect x="0.5" y="0.5" width="9.5" height="8" fill="#f4f4f6" stroke="#9aa3b0" stroke-width="0.9"/><path d="M2.5 2.8H8M2.5 4.6H8M2.5 6.4H8" stroke="#a0a6b0" stroke-width="0.8"/><path d="M6.6 7L8.4 9.2L11.8 5.2" stroke="#1fa51f" stroke-width="2" fill="none"/></svg><div class="t" style="left:60.7px;top:450.425px;font-size:10.861px;line-height:12.49px;color:#333;transform:scaleX(0.9346);transform-origin:0 0;">Заказ-наряд</div><div class="t" style="left:624.3px;top:450.184px;font-size:11.128px;line-height:12.797px;color:#333;transform:scaleX(0.9346);transform-origin:0 0;">Продажа з\ч и сервис …</div><div class="t" style="left:757.2px;top:450.425px;font-size:10.861px;line-height:12.49px;color:#333;transform:scaleX(0.9346);transform-origin:0 0;">Рыжков Вячеслав Вал…</div><div class="t" style="left:890px;top:450.425px;font-size:10.861px;line-height:12.49px;color:#333;transform:scaleX(0.9346);transform-origin:0 0;">CADDY ВИШНЕВЫЙ …</div><div style="left:10px;top:467.6px;width:1006px;height:21.14px;background:#fff;border-bottom:1px solid #e6e6e6;overflow:hidden"></div><svg style="position:absolute;left:42px;top:473.1px" width="13" height="11" viewBox="0 0 13 11"><rect x="0.5" y="0.5" width="9.5" height="8" fill="#f4f4f6" stroke="#9aa3b0" stroke-width="0.9"/><path d="M2.5 2.8H8M2.5 4.6H8M2.5 6.4H8" stroke="#a0a6b0" stroke-width="0.8"/></svg><div class="t" style="left:60.7px;top:471.565px;font-size:10.861px;line-height:12.49px;color:#333;transform:scaleX(0.9346);transform-origin:0 0;">Заявка на ремонт</div><div class="t" style="left:624.3px;top:471.324px;font-size:11.128px;line-height:12.797px;color:#333;transform:scaleX(0.9346);transform-origin:0 0;">Продажа з\ч и сервис …</div><div class="t" style="left:757.2px;top:471.565px;font-size:10.861px;line-height:12.49px;color:#333;transform:scaleX(0.9346);transform-origin:0 0;">89853189780 Арсений</div><div class="t" style="left:890px;top:471.565px;font-size:10.861px;line-height:12.49px;color:#333;transform:scaleX(0.9346);transform-origin:0 0;">MULTIVAN VIN wegtweh…</div><div style="left:10px;top:488.74px;width:1006px;height:21.14px;background:#fff;border-bottom:1px solid #e6e6e6;overflow:hidden"></div><svg style="position:absolute;left:42px;top:494.24px" width="13" height="11" viewBox="0 0 13 11"><rect x="0.5" y="0.5" width="9.5" height="8" fill="#f4f4f6" stroke="#9aa3b0" stroke-width="0.9"/><path d="M2.5 2.8H8M2.5 4.6H8M2.5 6.4H8" stroke="#a0a6b0" stroke-width="0.8"/><path d="M6.6 7L8.4 9.2L11.8 5.2" stroke="#1fa51f" stroke-width="2" fill="none"/></svg><div class="t" style="left:60.7px;top:492.705px;font-size:10.861px;line-height:12.49px;color:#333;transform:scaleX(0.9346);transform-origin:0 0;">Заявка на ремонт</div><div class="t" style="left:217.5px;top:492.705px;font-size:10.861px;line-height:12.49px;color:#333;transform:scaleX(0.9346);transform-origin:0 0;">ТК000001382</div><div class="t" style="left:316px;top:492.705px;font-size:10.861px;line-height:12.49px;color:#333;transform:scaleX(0.9346);transform-origin:0 0;">26.02.2025…</div><div class="t" style="left:391.5px;top:492.705px;font-size:10.861px;line-height:12.49px;color:#333;transform:scaleX(0.9346);transform-origin:0 0;">Музафаров Данил Ахм…</div><div class="t" style="left:624.3px;top:492.464px;font-size:11.128px;line-height:12.797px;color:#333;transform:scaleX(0.9346);transform-origin:0 0;">Продажа з\ч и сервис …</div><div class="t" style="left:757.2px;top:492.705px;font-size:10.861px;line-height:12.49px;color:#333;transform:scaleX(0.9346);transform-origin:0 0;">Музафаров Данил Ахм…</div><div class="t" style="left:890px;top:492.705px;font-size:10.861px;line-height:12.49px;color:#333;transform:scaleX(0.9346);transform-origin:0 0;">VOLKSWAGEN POLO …</div><div style="left:10px;top:509.88px;width:1006px;height:21.14px;background:#fff;border-bottom:1px solid #e6e6e6;overflow:hidden"></div><svg style="position:absolute;left:42px;top:515.38px" width="13" height="11" viewBox="0 0 13 11"><rect x="0.5" y="0.5" width="9.5" height="8" fill="#f4f4f6" stroke="#9aa3b0" stroke-width="0.9"/><path d="M2.5 2.8H8M2.5 4.6H8M2.5 6.4H8" stroke="#a0a6b0" stroke-width="0.8"/><path d="M6.6 7L8.4 9.2L11.8 5.2" stroke="#1fa51f" stroke-width="2" fill="none"/></svg><div class="t" style="left:60.7px;top:513.845px;font-size:10.861px;line-height:12.49px;color:#333;transform:scaleX(0.9346);transform-origin:0 0;">Заявка на ремонт</div><div class="t" style="left:217.5px;top:513.845px;font-size:10.861px;line-height:12.49px;color:#333;transform:scaleX(0.9346);transform-origin:0 0;">ТК000001383</div><div class="t" style="left:316px;top:513.845px;font-size:10.861px;line-height:12.49px;color:#333;transform:scaleX(0.9346);transform-origin:0 0;">26.02.2025…</div><div class="t" style="left:391.5px;top:513.845px;font-size:10.861px;line-height:12.49px;color:#333;transform:scaleX(0.9346);transform-origin:0 0;">Мордвинов Максим Ал…</div><div class="t" style="left:624.3px;top:513.604px;font-size:11.128px;line-height:12.797px;color:#333;transform:scaleX(0.9346);transform-origin:0 0;">Продажа з\ч и сервис …</div><div style="left:10px;top:531.02px;width:1006px;height:9.58px;background:#98fa98;overflow:hidden"></div><div style="left:10px;top:531.02px;width:1006px;height:9.58px;overflow:hidden"><svg style="position:absolute;left:32px;top:5.5px" width="13" height="11" viewBox="0 0 13 11"><rect x="0.5" y="0.5" width="9.5" height="8" fill="#f4f4f6" stroke="#9aa3b0" stroke-width="0.9"/><path d="M2.5 2.8H8M2.5 4.6H8M2.5 6.4H8" stroke="#a0a6b0" stroke-width="0.8"/></svg><div class="t" style="left:50.7px;top:3.965px;font-size:10.861px;line-height:12.49px;color:#333;transform:scaleX(0.9346);transform-origin:0 0;">Заказ-наряд</div><div class="t" style="left:207.5px;top:3.965px;font-size:10.861px;line-height:12.49px;color:#333;transform:scaleX(0.9346);transform-origin:0 0;">ТК000004795</div><div class="t" style="left:306px;top:3.965px;font-size:10.861px;line-height:12.49px;color:#333;transform:scaleX(0.9346);transform-origin:0 0;">26.02.2025…</div><div class="t" style="left:381.5px;top:3.965px;font-size:10.861px;line-height:12.49px;color:#333;transform:scaleX(0.9346);transform-origin:0 0;">Мордвинов Максим Ал…</div><div class="t" style="left:614.3px;top:3.724px;font-size:11.128px;line-height:12.797px;color:#333;transform:scaleX(0.9346);transform-origin:0 0;">Продажа з\ч и сервис …</div><div class="t" style="left:747.2px;top:3.965px;font-size:10.861px;line-height:12.49px;color:#333;transform:scaleX(0.9346);transform-origin:0 0;">Мордвинов Максим Ал…</div><div class="t" style="left:880px;top:3.965px;font-size:10.861px;line-height:12.49px;color:#333;transform:scaleX(0.9346);transform-origin:0 0;">HYUNDAI CRETA БЕЛ…</div></div><div style="left:942.3px;top:541.6px;width:74.5px;height:16.1px;border:1px solid #c6c6c6;border-top:none;background:linear-gradient(#fafafa,#ececec)"></div><div style="left:960.5px;top:541.6px;width:1px;height:16px;background:#cfcfcf"></div><div style="left:979.5px;top:541.6px;width:1px;height:16px;background:#cfcfcf"></div><div style="left:998.6px;top:541.6px;width:1px;height:16px;background:#cfcfcf"></div><svg style="position:absolute;left:942px;top:542px" width="75" height="16" viewBox="0 0 75 16"><path d="M5.7 5.2H13.6" stroke="#333" stroke-width="1.3"/><path d="M5.7 10.5L9.65 6.3L13.6 10.5Z" fill="#333"/><path d="M23.8 10L28.1 6.1L32.4 10Z" fill="#333"/><path d="M42.8 6.1L51.3 6.1L47.05 10.5Z" fill="#333"/><path d="M61.3 6.1L69.4 6.1L65.35 10.3Z" fill="#333"/><path d="M61.3 11.2H69.4" stroke="#333" stroke-width="1.3"/></svg><div style="left:0px;top:567.8px;width:1024px;height:1px;background:#c9c9c9"></div><div class="t" style="left:11.9px;top:578.076px;font-size:11.181px;line-height:12.858px;color:#444;transform:scaleX(0.9346);transform-origin:0 0;">Сводная ведомость</div><div class="t" style="left:122.6px;top:578.076px;font-size:11.181px;line-height:12.858px;color:#444;transform:scaleX(0.9346);transform-origin:0 0;">Обслуживание</div><div class="t" style="left:207.6px;top:578.076px;font-size:11.181px;line-height:12.858px;color:#444;transform:scaleX(0.9346);transform-origin:0 0;">Календарь планирования</div><div class="t" style="left:344.7px;top:578.076px;font-size:11.181px;line-height:12.858px;color:#444;transform:scaleX(0.9346);transform-origin:0 0;">Отчеты раздела</div><div class="t" style="left:437.3px;top:578.076px;font-size:11.181px;line-height:12.858px;color:#444;transform:scaleX(0.9346);transform-origin:0 0;">Заказ-наряды</div><div class="t" style="left:517.4px;top:578.076px;font-size:11.181px;line-height:12.858px;color:#444;transform:scaleX(0.9346);transform-origin:0 0;">Заявки на ремонт</div><div class="t" style="left:616.4px;top:578.076px;font-size:11.181px;line-height:12.858px;color:#444;transform:scaleX(0.9346);transform-origin:0 0;">Сводная ведомость</div><div class="t" style="left:764.4px;top:578.076px;font-size:11.181px;line-height:12.858px;color:#444;transform:scaleX(0.9346);transform-origin:0 0;">Закрытие смены</div><div class="t" style="left:858px;top:578.076px;font-size:11.181px;line-height:12.858px;color:#444;transform:scaleX(0.9346);transform-origin:0 0;">Денежные средства</div><div style="left:149px;top:103px;width:571.5px;height:382.8px;background:#fff;border:1px solid #ababab;box-shadow:0 1px 6px rgba(0,0,0,0.16)"></div><div class="t" style="left:159.4px;top:110.045px;font-size:15.301px;line-height:17.596px;color:#6e6e6e;transform:scaleX(0.9346);transform-origin:0 0;">Настройка формы</div><svg style="position:absolute;left:699.5px;top:114.5px" width="10" height="10" viewBox="0 0 10 10"><path d="M1 1L9 9M9 1L1 9" stroke="#555" stroke-width="1.1"/></svg><svg style="position:absolute;left:160px;top:145px" width="13" height="12" viewBox="0 0 13 12"><path d="M1 2.5H5L6 3.5H12V11H1Z" fill="#f5d07a" stroke="#c9a04a" stroke-width="0.8"/><path d="M1 4.5H12" stroke="#e0b45a" stroke-width="0.8"/><circle cx="3.4" cy="9" r="2.9" fill="#3fae49"/><path d="M3.4 7.3V10.7M1.7 9H5.1" stroke="#fff" stroke-width="1.1"/></svg><div class="t" style="left:176px;top:144.624px;font-size:11.128px;line-height:12.797px;color:#555;transform:scaleX(0.9346);transform-origin:0 0;">Добавить группу</div><svg style="position:absolute;left:275.8px;top:145px" width="11" height="11" viewBox="0 0 11 11"><circle cx="5.5" cy="5.5" r="5.4" fill="#3fae49"/><path d="M5.5 2.4V8.6M2.4 5.5H8.6" stroke="#fff" stroke-width="1.7"/></svg><div class="t" style="left:290.8px;top:144.624px;font-size:11.128px;line-height:12.797px;color:#555;transform:scaleX(0.9346);transform-origin:0 0;">Добавить поля</div><svg style="position:absolute;left:382px;top:145.5px" width="10" height="10" viewBox="0 0 10 10"><path d="M1 1L9 9M9 1L1 9" stroke="#d92b2b" stroke-width="2"/></svg><svg style="position:absolute;left:402.5px;top:144.5px" width="10" height="12" viewBox="0 0 10 12"><path d="M5 0.5L9.5 5.5H6.8V11.5H3.2V5.5H0.5Z" fill="#3a95dc"/></svg><svg style="position:absolute;left:422.5px;top:144.5px" width="10" height="12" viewBox="0 0 10 12"><path d="M5 11.5L9.5 6.5H6.8V0.5H3.2V6.5H0.5Z" fill="#3a95dc"/></svg><svg style="position:absolute;left:442px;top:144px" width="12" height="12" viewBox="0 0 12 12"><path d="M2.5 0.5H11.5V9.5" fill="none" stroke="#9aa" stroke-width="0.9"/><rect x="0.5" y="2.5" width="9" height="9" fill="#dfe6ea" stroke="#8a9aa6" stroke-width="0.9"/><path d="M2.2 6.5L4.3 8.7L8.3 4" stroke="#1fa51f" stroke-width="1.8" fill="none"/></svg><svg style="position:absolute;left:462px;top:144px" width="12" height="12" viewBox="0 0 12 12"><path d="M2.5 2.5V0.5H11.5V9.5H9.5" fill="#eef1f4" stroke="#8a9aa6" stroke-width="0.9"/><rect x="0.5" y="2.5" width="9" height="9" fill="#f4f6f8" stroke="#8a9aa6" stroke-width="0.9"/></svg><svg style="position:absolute;left:482px;top:144px" width="11" height="11" viewBox="0 0 11 11"><circle cx="5.5" cy="5.5" r="4.8" fill="none" stroke="#333" stroke-width="1"/><path d="M3.9 4.3a1.6 1.6 0 1 1 2.3 1.4c-0.5 0.3-0.7 0.6-0.7 1.1" stroke="#333" stroke-width="1" fill="none"/><circle cx="5.5" cy="8.2" r="0.6" fill="#333"/></svg><div class="t" style="left:662.6px;top:144.624px;font-size:11.128px;line-height:12.797px;color:#555;transform:scaleX(0.9346);transform-origin:0 0;">Еще</div><div class="dd" style="left:699.7px;top:148.8px;border-left-width:3px;border-right-width:3px;border-top-width:3.3px;border-top-color:#444"></div><div class="t" style="left:156px;top:166.765px;font-size:10.861px;line-height:12.49px;color:#444;transform:scaleX(0.9346);transform-origin:0 0;">Элементы формы</div><div class="t" style="left:426.4px;top:166.424px;font-size:11.128px;line-height:12.797px;color:#444;transform:scaleX(0.9346);transform-origin:0 0;">Свойства элемента формы</div><div style="left:156px;top:186.1px;width:263.8px;height:270.2px;border:1px solid #c4c4c4;background:#fff;overflow:hidden"></div><div class="cb" style="left:192.3px;top:191.6px;width:11.5px;height:12px;"></div><div class="mn" style="left:211.7px;top:196.2px;width:8px;height:3px;"></div><div class="t" style="left:229.3px;top:191.465px;font-size:10.861px;line-height:12.49px;color:#3a3a3a;transform:scaleX(0.9346);transform-origin:0 0;">Телефон</div><div class="cb" style="left:192.3px;top:212.67px;width:11.5px;height:12px;"><svg style="position:absolute;left:0.5px;top:-1.5px" width="11" height="11" viewBox="0 0 11 11"><path d="M1.5 6L4.3 9.1L10.3 0.7" stroke="#e8891c" stroke-width="1.7" fill="none"/></svg></div><div class="mn" style="left:211.7px;top:217.27px;width:8px;height:3px;"></div><div style="left:226px;top:208.47px;width:60px;height:20.4px;background:#86b3d2;border:2px solid #1f67a3"></div><div class="t" style="left:229.3px;top:212.535px;font-size:10.861px;line-height:12.49px;color:#3a3a3a;transform:scaleX(0.9346);transform-origin:0 0;">Контрагент</div><div class="cb" style="left:192.3px;top:233.74px;width:11.5px;height:12px;"></div><div class="mn" style="left:211.7px;top:238.34px;width:8px;height:3px;"></div><div class="t" style="left:229.3px;top:233.605px;font-size:10.861px;line-height:12.49px;color:#3a3a3a;transform:scaleX(0.9346);transform-origin:0 0;">ИНН</div><div class="cb" style="left:192.3px;top:254.81px;width:11.5px;height:12px;"><svg style="position:absolute;left:0.5px;top:-1.5px" width="11" height="11" viewBox="0 0 11 11"><path d="M1.5 6L4.3 9.1L10.3 0.7" stroke="#e8891c" stroke-width="1.7" fill="none"/></svg></div><div class="mn" style="left:211.7px;top:259.41px;width:8px;height:3px;"></div><div class="t" style="left:229.3px;top:254.675px;font-size:10.861px;line-height:12.49px;color:#3a3a3a;transform:scaleX(0.9346);transform-origin:0 0;">Договор</div><div class="cb" style="left:192.3px;top:275.88px;width:11.5px;height:12px;"></div><div class="mn" style="left:211.7px;top:280.48px;width:8px;height:3px;"></div><div class="t" style="left:229.3px;top:275.745px;font-size:10.861px;line-height:12.49px;color:#3a3a3a;transform:scaleX(0.9346);transform-origin:0 0;">Владелец</div><div class="cb" style="left:192.3px;top:296.95px;width:11.5px;height:12px;"><svg style="position:absolute;left:0.5px;top:-1.5px" width="11" height="11" viewBox="0 0 11 11"><path d="M1.5 6L4.3 9.1L10.3 0.7" stroke="#e8891c" stroke-width="1.7" fill="none"/></svg></div><div class="mn" style="left:211.7px;top:301.55px;width:8px;height:3px;"></div><div class="t" style="left:229.3px;top:296.815px;font-size:10.861px;line-height:12.49px;color:#3a3a3a;transform:scaleX(0.9346);transform-origin:0 0;">Автомобиль</div><div class="cb" style="left:192.3px;top:318.02px;width:11.5px;height:12px;"></div><div class="mn" style="left:211.7px;top:322.62px;width:8px;height:3px;"></div><div class="t" style="left:229.3px;top:317.885px;font-size:10.861px;line-height:12.49px;color:#3a3a3a;transform:scaleX(0.9346);transform-origin:0 0;">Гос. номер</div><div class="cb" style="left:192.3px;top:339.09px;width:11.5px;height:12px;"></div><div class="mn" style="left:211.7px;top:343.69px;width:8px;height:3px;"></div><div class="t" style="left:229.3px;top:338.955px;font-size:10.861px;line-height:12.49px;color:#3a3a3a;transform:scaleX(0.9346);transform-origin:0 0;">Пробег</div><div class="cb" style="left:192.3px;top:360.16px;width:11.5px;height:12px;"></div><div class="mn" style="left:211.7px;top:364.76px;width:8px;height:3px;"></div><div class="t" style="left:229.3px;top:360.025px;font-size:10.861px;line-height:12.49px;color:#3a3a3a;transform:scaleX(0.9346);transform-origin:0 0;">Счет-фактура</div><div class="cb" style="left:192.3px;top:381.23px;width:11.5px;height:12px;"></div><div class="mn" style="left:211.7px;top:385.83px;width:8px;height:3px;"></div><div class="t" style="left:229.3px;top:381.095px;font-size:10.861px;line-height:12.49px;color:#3a3a3a;transform:scaleX(0.9346);transform-origin:0 0;">Основание</div><div class="cb" style="left:192.3px;top:402.3px;width:11.5px;height:12px;"></div><div class="mn" style="left:211.7px;top:406.9px;width:8px;height:3px;"></div><div class="t" style="left:229.3px;top:402.165px;font-size:10.861px;line-height:12.49px;color:#3a3a3a;transform:scaleX(0.9346);transform-origin:0 0;">Сводный ремонтный заказ</div><div class="cb" style="left:192.3px;top:423.37px;width:11.5px;height:12px;"></div><div class="mn" style="left:211.7px;top:427.97px;width:8px;height:3px;"></div><div class="t" style="left:229.3px;top:423.235px;font-size:10.861px;line-height:12.49px;color:#3a3a3a;transform:scaleX(0.9346);transform-origin:0 0;">Тип цен</div><div class="cb" style="left:192.3px;top:444.44px;width:11.5px;height:12px;"></div><div class="mn" style="left:211.7px;top:449.04px;width:8px;height:3px;"></div><div class="t" style="left:229.3px;top:444.305px;font-size:10.861px;line-height:12.49px;color:#3a3a3a;transform:scaleX(0.9346);transform-origin:0 0;">Вид ремонта</div><div style="left:410.9px;top:394.6px;width:6px;height:43px;background:#d9d9d9;border-radius:3px"></div><div style="left:410.9px;top:394.6px;width:6px;height:7px;background:#9b9b9b;border-radius:0 0 3px 3px"></div><div class="dd" style="left:411.8px;top:445.5px;border-left-width:2.2px;border-right-width:2.2px;border-top-width:3px;border-top-color:#444"></div><div style="left:427.3px;top:186.3px;width:286.3px;height:270px;border:1px solid #c4c4c4;background:#fff"></div><div style="left:549.8px;top:191.3px;width:158.8px;height:31.6px;border:1px solid #c9c9c9;border-radius:2px;background:#fff;box-shadow:inset 0 1px 1px rgba(0,0,0,0.06)"></div><div class="t" style="left:552px;top:193.565px;font-size:10.861px;line-height:12.49px;color:#444;transform:scaleX(0.9346);transform-origin:0 0;">Контрагент</div><div style="left:430px;top:238.4px;width:278.2px;height:31.2px;border:1px solid #c9c9c9;border-radius:2px;background:#fff;box-shadow:inset 0 1px 1px rgba(0,0,0,0.06)"></div><div style="left:430px;top:286.3px;width:278.2px;height:15.1px;border:1px solid #c9c9c9;border-radius:2px;background:#fff"></div><div style="left:691.7px;top:287.3px;width:1px;height:13.1px;background:#d6d6d6"></div><div class="dd" style="left:697.5px;top:292.55px;border-left-width:2.5px;border-right-width:2.5px;border-top-width:3px;border-top-color:#333"></div><div class="t" style="left:553px;top:287.715px;font-size:10.861px;line-height:12.49px;color:#333;transform:scaleX(0.9346);transform-origin:0 0;">Авто</div><div style="left:430px;top:302px;width:278.2px;height:15.2px;border:1px solid #c9c9c9;border-radius:2px;background:#fff"></div><div style="left:691.7px;top:303px;width:1px;height:13.2px;background:#d6d6d6"></div><div class="dd" style="left:697.5px;top:308.3px;border-left-width:2.5px;border-right-width:2.5px;border-top-width:3px;border-top-color:#333"></div><div class="t" style="left:553px;top:303.465px;font-size:10.861px;line-height:12.49px;color:#333;transform:scaleX(0.9346);transform-origin:0 0;">Авто</div><div style="left:430px;top:333.7px;width:278.2px;height:15.1px;border:1px solid #c9c9c9;border-radius:2px;background:#fff"></div><div style="left:691.7px;top:334.7px;width:1px;height:13.1px;background:#d6d6d6"></div><div class="dd" style="left:697.5px;top:339.95px;border-left-width:2.5px;border-right-width:2.5px;border-top-width:3px;border-top-color:#333"></div><div class="t" style="left:551.8px;top:335.115px;font-size:10.861px;line-height:12.49px;color:#2c5fa8;transform:scaleX(0.9346);transform-origin:0 0;">Нет</div><div style="left:430px;top:356px;width:278px;height:1px;background:#e2e2e2"></div><div class="t" style="left:573.2px;top:362.865px;font-size:10.861px;line-height:12.49px;color:#444;transform:scaleX(0.9346);transform-origin:0 0;">Высота</div><div style="left:614.3px;top:362.3px;width:63.2px;height:14.5px;border:1px solid #c9c9c9;border-radius:2px;background:#fff"></div><div style="left:661.5px;top:363.3px;width:1px;height:12.5px;background:#d6d6d6"></div><div class="t" style="left:653.8px;top:363.465px;font-size:10.861px;line-height:12.49px;color:#333;transform:scaleX(0.9346);transform-origin:0 0;">0</div><svg style="position:absolute;left:664px;top:364px" width="10" height="11" viewBox="0 0 10 11"><path d="M3.5 3.2L5 1.8L6.5 3.2Z M3.5 7.8L5 9.2L6.5 7.8Z" fill="#555"/><path d="M1 5.5H9" stroke="#e0e0e0" stroke-width="0.6"/></svg><div style="left:430px;top:414.3px;width:283px;height:1px;background:#b8b8b8"></div><svg style="position:absolute;left:702.5px;top:420px" width="6" height="28" viewBox="0 0 6 28"><path d="M1.3 4.5L3 2L4.7 4.5Z" fill="#ccc"/><path d="M1 22.5L3 25.5L5 22.5Z" fill="#444"/></svg><div class="btn" style="left:504.1px;top:462.2px;width:65.6px;height:16.4px;border-radius:3px"></div><div class="t" style="left:529.5px;top:464.614px;font-size:10.807px;line-height:12.428px;color:#4a4a4a;transform:scaleX(0.9346);transform-origin:0 0;">ОК</div><div class="btn" style="left:576.2px;top:462.2px;width:65.4px;height:16.4px;border-radius:3px"></div><div class="t" style="left:592px;top:464.614px;font-size:10.807px;line-height:12.428px;color:#4a4a4a;transform:scaleX(0.9346);transform-origin:0 0;">Отмена</div><div class="btn" style="left:648.2px;top:462.2px;width:65.6px;height:16.4px;border-radius:3px"></div><div class="t" style="left:656px;top:464.614px;font-size:10.807px;line-height:12.428px;color:#4a4a4a;transform:scaleX(0.9346);transform-origin:0 0;">Применить</div><div style="left:304px;top:192.5px;width:261.8px;height:202px;background:#fff;border:1px solid #bcbcbc;box-shadow:1px 1px 5px rgba(0,0,0,0.14)"></div><div class="t" style="left:313.6px;top:201.145px;font-size:15.301px;line-height:17.596px;color:#222;transform:scaleX(0.9346);transform-origin:0 0;">Выберите поля для размещен…</div><svg style="position:absolute;left:545.5px;top:205px" width="9" height="9" viewBox="0 0 9 9"><path d="M0.8 0.8L8.2 8.2M8.2 0.8L0.8 8.2" stroke="#555" stroke-width="1.1"/></svg><div style="left:310.6px;top:231.3px;width:173.2px;height:156.3px;border:1px solid #c4c4c4;background:#fff;overflow:hidden"></div><div class="cb" style="left:318px;top:236.3px;width:11.5px;height:11.5px;"></div><div class="t" style="left:336px;top:235.965px;font-size:10.861px;line-height:12.49px;color:#3a3a3a;transform:scaleX(0.9346);transform-origin:0 0;">CoMagicID</div><div class="cb" style="left:318px;top:257.4px;width:11.5px;height:11.5px;"></div><div class="t" style="left:336px;top:257.065px;font-size:10.861px;line-height:12.49px;color:#3a3a3a;transform:scaleX(0.9346);transform-origin:0 0;">Пользователь для перек…</div><div style="left:311px;top:274px;width:161px;height:21px;background:#86b3d2;border:2px solid #1f67a3"></div><div class="cb" style="left:318px;top:278.5px;width:11.5px;height:11.5px;"><svg style="position:absolute;left:0.5px;top:-1.5px" width="11" height="11" viewBox="0 0 11 11"><path d="M1.5 6L4.3 9.1L10.3 0.7" stroke="#e8891c" stroke-width="1.7" fill="none"/></svg></div><div class="t" style="left:336px;top:278.165px;font-size:10.861px;line-height:12.49px;color:#3a3a3a;transform:scaleX(0.9346);transform-origin:0 0;">Телефон</div><div class="cb" style="left:318px;top:299.6px;width:11.5px;height:11.5px;"></div><div class="t" style="left:336px;top:299.265px;font-size:10.861px;line-height:12.49px;color:#3a3a3a;transform:scaleX(0.9346);transform-origin:0 0;">(не используется) Согла…</div><div class="cb" style="left:318px;top:320.7px;width:11.5px;height:11.5px;"></div><div class="t" style="left:336px;top:320.365px;font-size:10.861px;line-height:12.49px;color:#3a3a3a;transform:scaleX(0.9346);transform-origin:0 0;">(не используется) Согла…</div><div class="cb" style="left:318px;top:341.8px;width:11.5px;height:11.5px;"></div><div class="t" style="left:336px;top:341.465px;font-size:10.861px;line-height:12.49px;color:#3a3a3a;transform:scaleX(0.9346);transform-origin:0 0;">Файл картинки</div><div class="cb" style="left:318px;top:362.9px;width:11.5px;height:11.5px;"></div><div class="t" style="left:336px;top:362.565px;font-size:10.861px;line-height:12.49px;color:#3a3a3a;transform:scaleX(0.9346);transform-origin:0 0;">Факс</div><div style="left:318px;top:383.8px;width:11.5px;height:3.8px;border:1px solid #c4c4c4;border-bottom:none;background:#fff"></div><div style="left:474.5px;top:250px;width:5.5px;height:118px;background:#d9d9d9;border-radius:3px"></div><div style="left:474.5px;top:353.3px;width:5.5px;height:10.6px;background:#9b9b9b;border-radius:3px"></div><div style="left:475.2px;top:238.5px;width:0;height:0;border-left:2px solid transparent;border-right:2px solid transparent;border-bottom:2.6px solid #555"></div><div style="left:475.2px;top:376.5px;width:0;height:0;border-left:2px solid transparent;border-right:2px solid transparent;border-top:2.6px solid #555"></div><div class="btn" style="left:489.3px;top:231px;width:69.6px;height:16.5px;border-radius:3px"></div><div class="t" style="left:518px;top:233.414px;font-size:10.807px;line-height:12.428px;color:#4a4a4a;transform:scaleX(0.9346);transform-origin:0 0;">ОК</div><div class="btn" style="left:489.3px;top:253px;width:69.6px;height:16.5px;border-radius:3px"></div><div class="t" style="left:507.5px;top:255.414px;font-size:10.807px;line-height:12.428px;color:#4a4a4a;transform:scaleX(0.9346);transform-origin:0 0;">Отмена</div><div class="btn" style="left:489.3px;top:371.5px;width:69.6px;height:16.5px;border-radius:3px"></div><div class="t" style="left:505.5px;top:373.914px;font-size:10.807px;line-height:12.428px;color:#4a4a4a;transform:scaleX(0.9346);transform-origin:0 0;">Справка</div><svg style="position:absolute;left:0;top:0" width="1024" height="583" viewBox="0 0 1024 583"><path d="M262.3 237.5L299.5 269" stroke="#e3201f" stroke-width="4.2" stroke-linecap="butt"/><path d="M311.5 276.8L294.3 273.8L305 263.6Z" fill="#e3201f"/></svg></body></html>
